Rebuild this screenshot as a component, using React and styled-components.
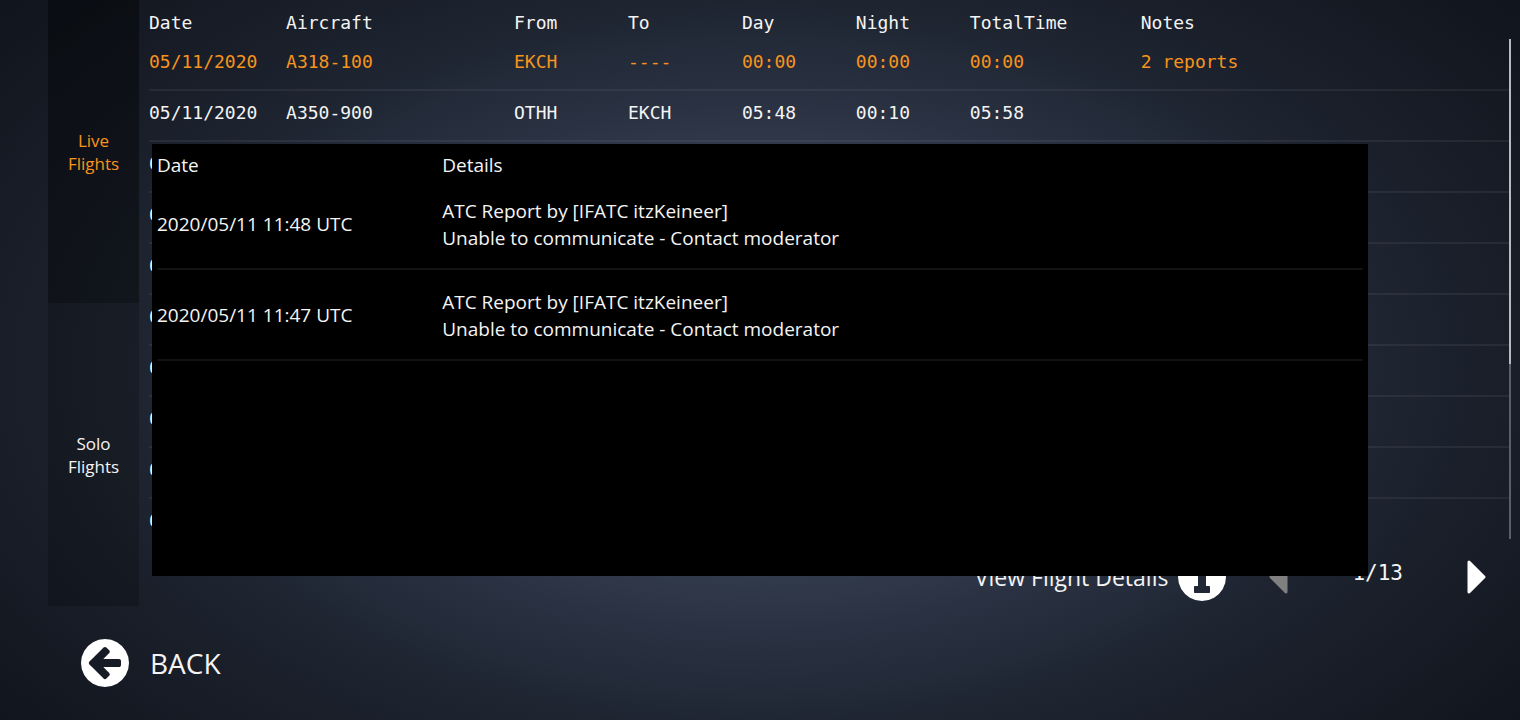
import React from 'react'
import styled, { createGlobalStyle } from 'styled-components'

const columns = [
  { name: 'Date', width: '10.08%' },
  { name: 'Aircraft', width: '16.76%' },
  { name: 'From', width: '8.38%' },
  { name: 'To', width: '8.38%' },
  { name: 'Day', width: '8.38%' },
  { name: 'Night', width: '8.38%' },
  { name: 'TotalTime', width: '12.57%' },
  { name: 'Notes', width: 'auto' },
]

const older = Array.from({ length: 8 }, () => ({
  cells: ['0', '', '', '', '', '', '', ''],
}))

const flights = [
  {
    active: true,
    cells: ['05/11/2020', 'A318-100', 'EKCH', '----', '00:00', '00:00', '00:00', '2 reports'],
  },
  { cells: ['05/11/2020', 'A350-900', 'OTHH', 'EKCH', '05:48', '00:10', '05:58', ''] },
  ...older,
]

const reports = [
  {
    date: '2020/05/11 11:48 UTC',
    title: 'ATC Report by [IFATC itzKeineer]',
    text: 'Unable to communicate - Contact moderator',
  },
  {
    date: '2020/05/11 11:47 UTC',
    title: 'ATC Report by [IFATC itzKeineer]',
    text: 'Unable to communicate - Contact moderator',
  },
]

const circle = 'm0 0M1664 896q0 209-103 385.5t-279.5 279.5-385.5 103-385.5-103-279.5-279.5-103-385.5 103-385.5 279.5-279.5 385.5-103 385.5 103 279.5 279.5 103 385.5z'

const arrow = 'M1408 960v-128q0-26-19-45t-45-19h-502l189-189q19-19 19-45t-19-45l-91-91q-18-18-45-18t-45 18l-362 362-91 91q-18 18-18 45t18 45l91 91 362 362q18 18 45 18t45-18l91-91q18-18 18-45t-18-45l-189-189h502q26 0 45-19t19-45z'

const info = 'M1152 1376v-160q0-14-9-23t-23-9h-96v-512q0-14-9-23t-23-9h-320q-14 0-23 9t-9 23v160q0 14 9 23t23 9h96v320h-96q-14 0-23 9t-9 23v160q0 14 9 23t23 9h448q14 0 23-9t9-23zM1024 480v-160q0-14-9-23t-23-9h-192q-14 0-23 9t-9 23v160q0 14 9 23t23 9h192q14 0 23-9t9-23z'

const RoundIcon = ({ shape }) => (
  <svg width="48" height="48" viewBox="128 128 1536 1536" aria-hidden="true">
    <path d={shape + circle} fill="#fff" fillRule="evenodd" />
  </svg>
)

const Caret = ({ left }) => (
  <svg width="20" height="34" viewBox="0 0 20 34" aria-hidden="true">
    <path
      d={left ? 'M18 2v30L3 17z' : 'M2 2v30l15-15z'}
      fill="currentColor"
      stroke="currentColor"
      strokeWidth="3"
      strokeLinejoin="round"
    />
  </svg>
)

const App = () => {
  return (
    <Page>
      <GlobalStyle />
      <Main>
        <Sidebar>
          <Tab $active>Live<br />Flights</Tab>
          <Tab>Solo<br />Flights</Tab>
        </Sidebar>
        <Logbook>
          <ListHolder>
            <FlightTable>
              <colgroup>
                {columns.map((c) => <Col key={c.name} $width={c.width} />)}
              </colgroup>
              <thead>
                <tr>
                  {columns.map((c) => <FlightHead key={c.name}>{c.name}</FlightHead>)}
                </tr>
              </thead>
              <tbody>
                {flights.map((flight, i) => (
                  <FlightRow key={i} $active={flight.active}>
                    {flight.cells.map((cell, j) => <FlightCell key={j}>{cell}</FlightCell>)}
                  </FlightRow>
                ))}
              </tbody>
            </FlightTable>
            <ScrollTrack>
              <ScrollThumb />
            </ScrollTrack>
          </ListHolder>
          <Pager>
            <DetailsButton>
              View Flight Details
              <RoundIcon shape={info} />
            </DetailsButton>
            <PageButton aria-label="Previous page" disabled>
              <Caret left />
            </PageButton>
            <PageCount>1/13</PageCount>
            <PageButton aria-label="Next page">
              <Caret />
            </PageButton>
          </Pager>
        </Logbook>
      </Main>
      <Footer>
        <BackButton>
          <RoundIcon shape={arrow} />
          BACK
        </BackButton>
      </Footer>
      <Dialog role="dialog" aria-label="Reports">
        <ReportTable>
          <colgroup>
            <Col $width="23.65%" />
            <Col $width="auto" />
          </colgroup>
          <thead>
            <tr>
              <ReportHead>Date</ReportHead>
              <ReportHead>Details</ReportHead>
            </tr>
          </thead>
          <tbody>
            {reports.map((report) => (
              <tr key={report.date}>
                <ReportCell>{report.date}</ReportCell>
                <ReportCell>{report.title}<br />{report.text}</ReportCell>
              </tr>
            ))}
          </tbody>
        </ReportTable>
      </Dialog>
    </Page>
  )
}

export default App

const GlobalStyle = createGlobalStyle`
* {
  box-sizing: border-box;
}

body {
  margin: 0;
  background-color: #10141d;
}

button {
  border: 0;
  padding: 0;
  background-color: transparent;
  font-family: inherit;
  color: inherit;
  cursor: pointer;
}
`;

const Page = styled.div`
position: relative;
display: flex;
flex-direction: column;
height: 100vh;
overflow: hidden;
background: radial-gradient(ellipse 50% 62% at 50% 51%, #3a4658 0%, #313a4b 47%, #272e3e 65%, #1e2531 82%, #181d27 102%, #10141d 130%);
color: #f4f4f4;
font-family: "Open Sans", "Noto Sans", sans-serif;
`;

const Main = styled.div`
display: flex;
flex: 1;
gap: 10px;
min-height: 0;
padding: 0 9px 0 48px;
`;

const Sidebar = styled.nav`
display: flex;
flex-direction: column;
width: 91px;
`;

const Tab = styled.button`
flex: 1;
&& {
  background-color: ${(p) => (p.$active ? 'rgba(0, 0, 0, 0.4)' : 'rgba(0, 0, 0, 0.2)')};
  color: ${(p) => (p.$active ? '#f7941d' : '#f4f4f4')};
  font-size: 17px;
  line-height: 23px;
}
`;

const Logbook = styled.div`
display: flex;
flex: 1;
flex-direction: column;
min-width: 0;
`;

const ListHolder = styled.div`
display: flex;
flex: 1;
align-items: flex-start;
min-height: 0;
overflow: hidden;
`;

const FlightTable = styled.table`
flex: 1;
table-layout: fixed;
border-collapse: separate;
border-spacing: 0;
font-family: "DejaVu Sans Mono", monospace;
font-size: 18px;
line-height: 24px;
text-align: left;
`;

const Col = styled.col`
width: ${(p) => p.$width};
`;

const FlightHead = styled.th`
height: 40px;
padding: 6px 0 0;
font-weight: normal;
`;

const FlightRow = styled.tr`
color: ${(p) => (p.$active ? '#f7941d' : '#f4f4f4')};
`;

const FlightCell = styled.td`
height: 51px;
padding: 0 0 6px;
border-bottom: 2px solid rgba(255, 255, 255, 0.06);
white-space: nowrap;
`;

const ScrollTrack = styled.div`
align-self: stretch;
width: 2px;
margin-top: 39px;
background-color: #5a5e66;
`;

const ScrollThumb = styled.div`
height: 65%;
background-color: #b8babf;
`;

const Pager = styled.div`
display: flex;
align-items: center;
justify-content: flex-end;
height: 67px;
padding: 9px 24px 0 0;
`;

const DetailsButton = styled.button`
display: flex;
align-items: center;
gap: 10px;
margin-right: 42px;
&& {
  font-size: 23px;
}
`;

const PageButton = styled.button`
display: flex;
padding: 6px 0;
&& {
  color: #fff;
}
&&:disabled {
  color: #808080;
}
`;

const PageCount = styled.div`
padding: 0 64px 8px;
font-family: "DejaVu Sans Mono", monospace;
font-size: 21px;
`;

const Footer = styled.footer`
display: flex;
align-items: center;
height: 114px;
padding-left: 81px;
`;

const BackButton = styled.button`
display: flex;
align-items: center;
gap: 21px;
&& {
  font-size: 28px;
}
`;

const Dialog = styled.section`
position: absolute;
inset: 20% 10%;
padding: 8px 5px;
background-color: #000;
`;

const ReportTable = styled.table`
width: 100%;
table-layout: fixed;
border-collapse: separate;
border-spacing: 0;
font-size: 19px;
line-height: 27px;
text-align: left;
`;

const ReportHead = styled.th`
padding: 0;
font-weight: normal;
`;

const ReportCell = styled.td`
height: 91px;
padding: 2px 0 0;
border-bottom: 2px solid #121212;
`;
